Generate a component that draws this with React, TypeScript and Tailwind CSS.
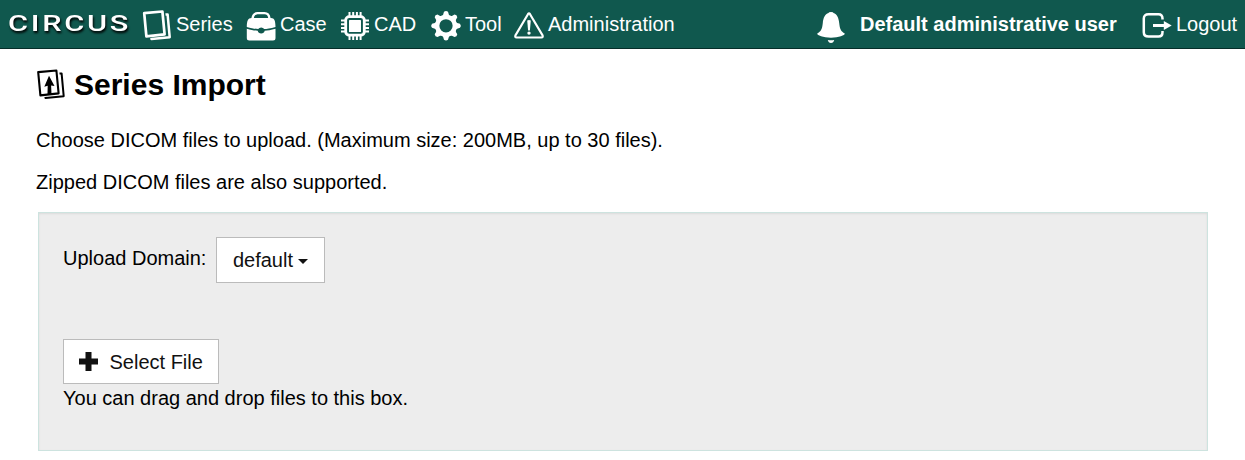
import type { ReactNode } from "react";

function Icon({ children, className = "" }: { children: ReactNode; className?: string }) {
  return (
    <svg viewBox="0 0 30 32" className={`h-8 w-[30px] shrink-0 overflow-visible ${className}`} fill="none" stroke="currentColor" aria-hidden="true">
      {children}
    </svg>
  );
}

function SeriesIcon({ upload = false, className = "" }: { upload?: boolean; className?: string }) {
  return (
    <Icon className={className}>
      <path d="M2.2 5.1 20.4 3.5 22.6 26.4 4.4 28.4Z" strokeWidth={upload ? 2.1 : 2.7} strokeLinejoin="round" />
      <path d="M23.5 6.6 25.600 6.400 27.700 29.200 9.500 31.100 9.300 30" strokeWidth={upload ? 2 : 2.5} strokeLinejoin="round" />
      {upload && <path d="M13 8.700 18.500 19 15.100 18.500 15.500 27H11.500L11.700 18.700 8.300 19.800Z" fill="currentColor" stroke="none" />}
    </Icon>
  );
}

function CaseIcon() {
  return (
    <Icon>
      <path d="M6.500 10.500C7 6.500 8.500 5.200 11.500 5.200h7c3 0 4.500 1.300 5 5.300" strokeWidth="2.300" />
      <path d="M5.500 10h19.500c3.500 0 4.500 3.200 4.500 9-5.200 1.400-8.800 2-11.300 2.100a3.500 3.500 0 0 0-6 0C9.700 21 6 20.400.8 19 .8 13.200 2 10 5.500 10Z" fill="currentColor" stroke="none" />
      <path d="M.8 20.700c4.500 1.300 7.800 1.900 10.900 2a3.600 3.600 0 0 0 7 0c3-.1 6.300-.700 10.800-2v9.400q0 2.500-2.500 2.500H3.300q-2.500 0-2.500-2.500Z" fill="currentColor" stroke="none" />
    </Icon>
  );
}

function CpuIcon() {
  return (
    <Icon>
      <path d="M9.500 4v4M13.200 4v4M16.900 4v4M20.600 4v4M9.500 27v5M13.200 27v5M16.900 27v5M20.600 27v5M1 12.500h5M1 16.200h5M1 19.900h5M1 23.600h5M24 12.500h5M24 16.200h5M24 19.900h5M24 23.600h5" strokeWidth="2" />
      <rect x="5.700" y="8.600" width="18.600" height="18.600" rx="3.500" strokeWidth="2.800" />
      <rect x="9" y="12" width="12" height="12" rx=".6" fill="currentColor" stroke="none" />
    </Icon>
  );
}

function GearIcon() {
  return (
    <Icon>
      <circle cx="15" cy="17.800" r="8.800" strokeWidth="4.300" />
      {[0, 45, 90, 135, 180, 225, 270, 315].map((angle) => (
        <path key={angle} d="M10.500 8.900Q12.500 7 13 3.800 15 2.200 17 3.800 17.500 7 19.500 8.900Z" fill="currentColor" stroke="none" transform={`rotate(${angle} 15 17.800)`} />
      ))}
    </Icon>
  );
}

function WarningIcon() {
  return (
    <Icon>
      <path d="M14.100 6Q15 4.700 15.900 6L28.600 27.500Q29.200 29.500 27.500 29.500H2.500Q.8 29.500 1.400 27.500Z" strokeWidth="2.200" />
      <path d="M13.200 12.500Q15 11.500 16.800 12.500L15.900 22.500H14.100Z" fill="currentColor" stroke="none" />
      <circle cx="15" cy="25.100" r="1.700" fill="currentColor" stroke="none" />
    </Icon>
  );
}

function BellIcon() {
  return (
    <Icon>
      <path d="M12.500 5Q12.500 4 15 4T17.500 5C21 6 22.700 9.800 23.200 15c.6 6 1.800 8.500 5.600 10.500.2 1.800-6 4.200-13.800 4.200S1 27.300 1.200 25.500C5 23.500 6.200 21 6.800 15c.5-5.200 2.200-9 5.700-10Z" fill="currentColor" stroke="none" />
      <path d="M11.800 32q3.200.5 6.400 0-.7 3-3.200 3t-3.200-3Z" fill="currentColor" stroke="none" />
    </Icon>
  );
}

function LogoutIcon() {
  return (
    <Icon>
      <path d="M20.500 11.500V10.500Q20.500 6.300 16.500 6.300H6.500Q1.800 6.300 1.800 10.500V24.300Q1.800 28.600 6.500 28.600H16.500Q20.500 28.600 20.500 24.300V23" strokeWidth="2.500" />
      <path d="M11 17.500H24" strokeWidth="3" />
      <path d="M21.800 13.100 29.700 17.500 21.800 21.900Z" fill="currentColor" stroke="none" />
    </Icon>
  );
}

function NavLink({ icon, label, className = "" }: { icon: ReactNode; label: string; className?: string }) {
  return (
    <a className={`flex h-12 shrink-0 items-center gap-1 whitespace-nowrap ${className}`}>
      {icon}
      <span>{label}</span>
    </a>
  );
}

export default function App() {
  return (
    <div className="min-h-[460px] bg-white text-xl text-black" style={{ fontFamily: '"Liberation Sans", Arial, sans-serif' }}>
      <header className="flex h-[49px] items-start border-b border-[#052e29] bg-[#10584e] pl-2 text-white">
        <svg className="h-12 w-[134px] shrink-0 overflow-visible [filter:drop-shadow(1px_2px_1px_#000)]">
          <text x="0" y="30.500" textLength="123" lengthAdjust="spacingAndGlyphs" fill="currentColor" className="[font-family:Roboto,sans-serif] text-[22.500px] font-medium tracking-[2px]">CIRCUS</text>
        </svg>
        <nav className="flex">
          <NavLink className="w-[104px]" icon={<SeriesIcon />} label="Series" />
          <NavLink className="w-[94px]" icon={<CaseIcon />} label="Case" />
          <NavLink className="w-[91px]" icon={<CpuIcon />} label="CAD" />
          <NavLink className="w-[83px]" icon={<GearIcon />} label="Tool" />
          <NavLink icon={<WarningIcon />} label="Administration" />
        </nav>
        <div className="ml-auto flex h-12 items-center">
          <BellIcon />
          <strong className="ml-3.5 w-[282px]">Default administrative user</strong>
          <NavLink className="w-[103px]" icon={<LogoutIcon />} label="Logout" />
        </div>
      </header>
      <main className="pr-[37px] pl-9">
        <h1 className="flex h-[71px] items-center text-3xl font-bold">
          <SeriesIcon upload className="mr-2 mb-[3px]" />
          Series Import
        </h1>
        <p className="mt-[5px] leading-[30px]">Choose DICOM files to upload. (Maximum size: 200MB, up to 30 files).</p>
        <p className="mt-3 leading-[30px]">Zipped DICOM files are also supported.</p>
        <section className="mt-[15px] ml-0.5 h-[239px] border border-[#cde3df] bg-[#ededed] px-6 pt-6 shadow-[inset_0_1px_2px_rgba(0,0,0,0.08)]">
          <div className="flex">
            <label className="mr-2.5 pt-[6px] leading-[30px]">Upload Domain:</label>
            <button className="flex h-[46px] w-[109px] items-center border border-[#bbb] bg-white pl-[15.500px] text-[#111]">
              default
              <svg viewBox="0 0 10 5" className="mt-0.5 ml-[5px] h-[5px] w-2.5" fill="currentColor"><path d="M0 0h10L5 5Z" /></svg>
            </button>
          </div>
          <button className="mt-14 flex h-[45px] w-[156px] items-center border border-[#bbb] bg-white pl-[15px] text-[#111]">
            <svg viewBox="0 0 19 19" className="mr-[11.500px] h-[19px] w-[19px]" fill="currentColor"><path d="M6.500 0h6v6.500H19v6h-6.500V19h-6v-6.500H0v-6h6.500Z" /></svg>
            Select File
          </button>
          <p className="leading-7">You can drag and drop files to this box.</p>
        </section>
      </main>
    </div>
  );
}
